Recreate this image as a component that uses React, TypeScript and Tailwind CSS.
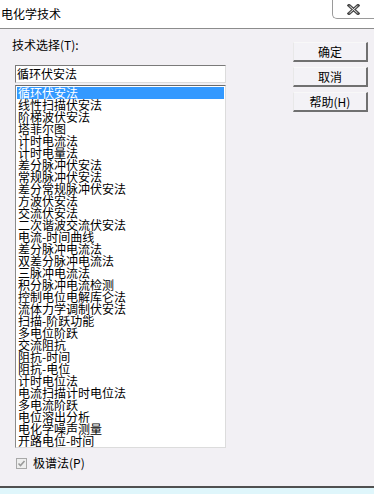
import { useState } from "react";

const methods = [
  "循环伏安法",
  "线性扫描伏安法",
  "阶梯波伏安法",
  "塔菲尔图",
  "计时电流法",
  "计时电量法",
  "差分脉冲伏安法",
  "常规脉冲伏安法",
  "差分常规脉冲伏安法",
  "方波伏安法",
  "交流伏安法",
  "二次谐波交流伏安法",
  "电流-时间曲线",
  "差分脉冲电流法",
  "双差分脉冲电流法",
  "三脉冲电流法",
  "积分脉冲电流检测",
  "控制电位电解库仑法",
  "流体力学调制伏安法",
  "扫描-阶跃功能",
  "多电位阶跃",
  "交流阻抗",
  "阻抗-时间",
  "阻抗-电位",
  "计时电位法",
  "电流扫描计时电位法",
  "多电流阶跃",
  "电位溶出分析",
  "电化学噪声测量",
  "开路电位-时间",
];

const Button = ({ label }: { label: string }) => (
  <button className="w-[75px] h-[20px] border-t border-l border-t-[#f8f8f8] border-l-[#e8e8e8] border-r-2 border-b-2 border-r-[#707070] border-b-[#707070] bg-[#f3f2f6] text-[12px] leading-[16px] text-black flex items-center justify-center">
    {label}
  </button>
);

const App = () => {
  const [selected, setSelected] = useState(0);

  return (
    <div
      className="w-[374px] h-[494px] flex flex-col bg-[#f2f0f4] overflow-hidden text-black"
      style={{ fontFamily: '"Noto Sans CJK SC", "Noto Sans", sans-serif' }}
    >
      {/* title bar */}
      <div className="h-[29px] shrink-0 bg-white border-b border-[#8c8c8c] flex justify-between">
        <div className="pl-[1px] pt-[7px] text-[12px] leading-[14px]">电化学技术</div>
        <div className="w-[42px] h-[19px] border-l border-b border-[#9a9a9a] rounded-bl-[5px] flex items-center justify-center">
          <svg width="13" height="11" viewBox="0 0 13 11">
            <path d="M2 1.5 L11 9.5 M11 1.5 L2 9.5" stroke="#4a4a4a" strokeWidth="3.2" strokeLinecap="square" />
            <path d="M2.5 2 L10.5 9 M10.5 2 L2.5 9" stroke="#e8e8e8" strokeWidth="1" />
          </svg>
        </div>
      </div>

      {/* body */}
      <div className="flex-1 flex">
        <div className="pl-[12px] pt-[9px] flex flex-col">
          <div className="text-[12px] leading-[14px]">技术选择(T):</div>
          <div className="ml-[3px] mt-[13px] w-[211px] h-[18px] bg-white border border-t-[#7a7a7a] border-l-[#7a7a7a] border-b-[#dcdcdc] border-r-[#dcdcdc] pl-[1px] text-[12px] leading-[16px]">
            {methods[selected]}
          </div>
          <div className="ml-[3px] mt-[2px] w-[211px] h-[363px] bg-white border border-t-[#6a6a6a] border-l-[#8a8a8a] border-b-[#dcdcdc] border-r-[#dcdcdc] p-[1px] overflow-hidden">
            {methods.map((m, i) => (
              <div
                key={m}
                onClick={() => setSelected(i)}
                className={`h-[12px] pl-[1px] text-[12px] leading-[12px] whitespace-nowrap ${
                  i === selected ? "bg-[#3399ff] text-white" : ""
                }`}
              >
                {m}
              </div>
            ))}
          </div>
          <div className="ml-[4px] mt-[8px] flex items-center gap-[6px]">
            <div className="w-[11px] h-[11px] border border-[#a8a8a8] bg-[#eeeeee] flex items-center justify-center">
              <svg width="9" height="9" viewBox="0 0 9 9">
                <path d="M1.5 4.5 L3.5 6.5 L7.5 2" stroke="#9a9a9a" strokeWidth="1.6" fill="none" />
              </svg>
            </div>
            <div className="text-[12px] leading-[14px]">极谱法(P)</div>
          </div>
        </div>

        <div className="ml-auto mr-[6px] mt-[13px] flex flex-col gap-[5px]">
          <Button label="确定" />
          <Button label="取消" />
          <Button label="帮助(H)" />
        </div>
      </div>

      {/* bottom edge */}
      <div className="h-[8px] shrink-0 border-t-2 border-[#505050] bg-[#dff6fb]" />
    </div>
  );
};

export default App;
